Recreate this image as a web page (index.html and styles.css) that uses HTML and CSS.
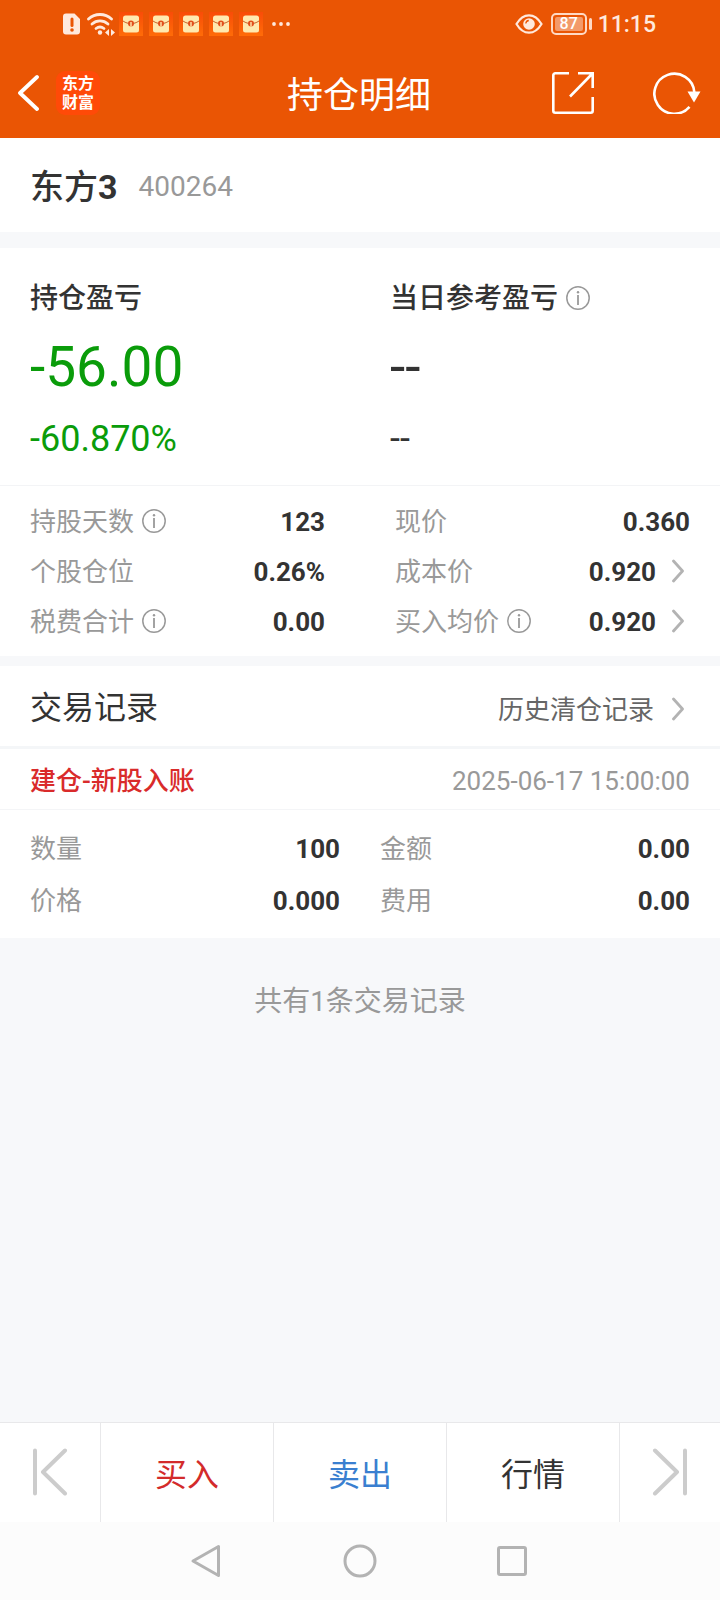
FILE: index.html
```html
<!DOCTYPE html>
<html lang="zh-CN">
<head>
<meta charset="utf-8">
<meta name="viewport" content="width=device-width, initial-scale=1">
<title>持仓明细</title>
<link rel="stylesheet" href="styles.css">
</head>
<body>
<svg class="defs" aria-hidden="true">
  <defs>
    <linearGradient id="packet-bg" x1="0" y1="0" x2="0" y2="1">
      <stop offset="0" stop-color="#f94c08"/>
      <stop offset="1" stop-color="#ff6c08"/>
    </linearGradient>
    <symbol id="packet" viewBox="0 0 24 24">
      <rect width="24" height="24" fill="url(#packet-bg)"/>
      <rect x="4" y="3.500" width="16" height="17" rx="2.500" fill="#ffeab0"/>
      <path d="M4 9c3 2 5 2.500 8 2.500s5-.5 8-2.500" fill="none" stroke="#c8642a" stroke-width="1"/>
      <circle cx="12" cy="11.500" r="3" fill="#e2501c"/>
      <path d="M12 10v4.500" stroke="#ffeab0" stroke-width="1.400"/>
    </symbol>
    <symbol id="info" viewBox="0 0 24 24">
      <circle cx="12" cy="12" r="11.200" fill="none" stroke="#999" stroke-width="1.500"/>
      <circle cx="12" cy="6.300" r="1.200" fill="#999"/>
      <path d="M12 9v10" stroke="#999" stroke-width="1.800"/>
    </symbol>
    <symbol id="chevron" viewBox="0 0 12 24">
      <path d="M1.500 2l9 10-9 10" fill="none" stroke="#b3b3b3" stroke-width="2.800" stroke-linecap="round" stroke-linejoin="round"/>
    </symbol>
  </defs>
</svg>
<div class="app">
  <header class="header">
    <div class="status">
      <div class="status-left">
        <svg class="sim" viewBox="0 0 18 22" aria-hidden="true">
          <path d="M3 .5h8.500l5.500 5.500v12.500a3 3 0 0 1-3 3h-11a3 3 0 0 1-3-3v-15a3 3 0 0 1 3-3z" fill="#ffe9dd"/>
          <path d="M9 6v6.500" stroke="#ea5504" stroke-width="3" stroke-linecap="round"/>
          <circle cx="9" cy="17" r="1.800" fill="#ea5504"/>
        </svg>
        <svg class="wifi" viewBox="0 0 28 24" aria-hidden="true">
          <g fill="none" stroke="#ffe9dd" stroke-width="2.800" stroke-linecap="round">
            <path d="M1.500 7a17 17 0 0 1 23 0"/>
            <path d="M5 12a12 12 0 0 1 16 0"/>
            <path d="M9 16.500a6.500 6.500 0 0 1 8 0"/>
          </g>
          <circle cx="13" cy="20.500" r="2.200" fill="#ffe9dd"/>
          <path d="M22 17v7l-4-3.500zM24 17v7l4-3.500z" fill="#ffe9dd"/>
        </svg>
        <div class="packets">
          <svg class="packet" aria-hidden="true"><use href="#packet"/></svg>
          <svg class="packet" aria-hidden="true"><use href="#packet"/></svg>
          <svg class="packet" aria-hidden="true"><use href="#packet"/></svg>
          <svg class="packet" aria-hidden="true"><use href="#packet"/></svg>
          <svg class="packet" aria-hidden="true"><use href="#packet"/></svg>
        </div>
        <svg class="dots" viewBox="0 0 18 4" aria-hidden="true">
          <g fill="#ffe9dd"><circle cx="2" cy="2" r="1.900"/><circle cx="9" cy="2" r="1.900"/><circle cx="16" cy="2" r="1.900"/></g>
        </svg>
      </div>
      <div class="status-right">
        <svg class="eye" viewBox="0 0 28 20" aria-hidden="true">
          <path d="M1.500 10C5 4 9 1.300 14 1.300S23 4 26.500 10C23 16 19 18.700 14 18.700S5 16 1.500 10z" fill="none" stroke="#ffe9dd" stroke-width="2.200"/>
          <circle cx="14" cy="10" r="5.800" fill="#ffe9dd"/>
          <path d="M10.800 9.500a3.300 3.300 0 0 1 3-3" fill="none" stroke="#ea5504" stroke-width="1.300"/>
        </svg>
        <div class="battery"><span class="battery-level">87</span></div>
        <time class="clock">11:15</time>
      </div>
    </div>
    <div class="titlebar">
      <div class="title-left">
        <button class="icon-button" type="button" aria-label="返回">
          <svg class="back" viewBox="0 0 22 38" aria-hidden="true"><path d="M20 3L3 19l17 16" fill="none" stroke="#fff" stroke-width="3.800" stroke-linecap="round" stroke-linejoin="round"/></svg>
        </button>
        <div class="logo"><span>东方</span><span>财富</span></div>
      </div>
      <h1 class="title">持仓明细</h1>
      <div class="title-right">
        <button class="icon-button" type="button" aria-label="分享">
          <svg class="share" viewBox="0 0 42 42" aria-hidden="true"><path d="M17 1.300H3.300a2 2 0 0 0-2 2v35.400a2 2 0 0 0 2 2h35.400a2 2 0 0 0 2-2V25M26 1.300h14.700V16M40 2L18 24.500" fill="none" stroke="#fff" stroke-width="2.600"/></svg>
        </button>
        <button class="icon-button" type="button" aria-label="刷新">
          <svg class="refresh" viewBox="0 0 48 42" aria-hidden="true"><path d="M41.300 20a20 20 0 1 0-4.800 14.800" fill="none" stroke="#fff" stroke-width="2.600"/><path d="M34.500 19.500h13L41 30.500z" fill="#fff"/></svg>
        </button>
      </div>
    </div>
  </header>

  <main class="content">
    <section class="card stock">
      <h2 class="stock-name">东方<b>3</b></h2>
      <span class="stock-code">400264</span>
    </section>

    <section class="card holding">
      <div class="summary">
        <div>
          <h3 class="summary-label">持仓盈亏</h3>
          <p class="summary-value down">-56.00</p>
          <p class="summary-rate down">-60.870%</p>
        </div>
        <div>
          <h3 class="summary-label">当日参考盈亏<svg class="info" aria-hidden="true"><use href="#info"/></svg></h3>
          <p class="summary-value">--</p>
          <p class="summary-rate">--</p>
        </div>
      </div>
      <dl class="pairs metrics">
        <div class="pair"><dt>持股天数<svg class="info" aria-hidden="true"><use href="#info"/></svg></dt><dd>123</dd></div>
        <div class="pair"><dt>现价</dt><dd>0.360</dd></div>
        <div class="pair"><dt>个股仓位</dt><dd>0.26%</dd></div>
        <div class="pair"><dt>成本价</dt><dd>0.920<svg class="chevron" aria-hidden="true"><use href="#chevron"/></svg></dd></div>
        <div class="pair"><dt>税费合计<svg class="info" aria-hidden="true"><use href="#info"/></svg></dt><dd>0.00</dd></div>
        <div class="pair"><dt>买入均价<svg class="info" aria-hidden="true"><use href="#info"/></svg></dt><dd>0.920<svg class="chevron" aria-hidden="true"><use href="#chevron"/></svg></dd></div>
      </dl>
    </section>

    <section class="card records">
      <div class="records-head">
        <h2 class="records-title">交易记录</h2>
        <a class="history" href="#">历史清仓记录<svg class="chevron" aria-hidden="true"><use href="#chevron"/></svg></a>
      </div>
      <div class="record-head">
        <h3 class="record-type">建仓-新股入账</h3>
        <time class="record-time">2025-06-17 15:00:00</time>
      </div>
      <dl class="pairs details">
        <div class="pair"><dt>数量</dt><dd>100</dd></div>
        <div class="pair"><dt>金额</dt><dd>0.00</dd></div>
        <div class="pair"><dt>价格</dt><dd>0.000</dd></div>
        <div class="pair"><dt>费用</dt><dd>0.00</dd></div>
      </dl>
    </section>
    <p class="total">共有1条交易记录</p>
  </main>

  <footer class="footer">
    <div class="actions">
      <button class="action step-button" type="button" aria-label="上一个">
        <svg class="step" viewBox="0 0 36 48" aria-hidden="true"><path d="M3 2.500v43M33 2.500L11 24l22 21.500" fill="none" stroke="#ccc" stroke-width="4" stroke-linecap="round" stroke-linejoin="round"/></svg>
      </button>
      <button class="action buy" type="button">买入</button>
      <button class="action sell" type="button">卖出</button>
      <button class="action" type="button">行情</button>
      <button class="action step-button" type="button" aria-label="下一个">
        <svg class="step" viewBox="0 0 36 48" aria-hidden="true"><path d="M33 2.500v43M3 2.500L25 24 3 45.500" fill="none" stroke="#ccc" stroke-width="4" stroke-linecap="round" stroke-linejoin="round"/></svg>
      </button>
    </div>
    <nav class="system-nav">
      <button class="icon-button" type="button" aria-label="返回"><svg class="nav-icon" viewBox="0 0 36 36" aria-hidden="true"><path d="M28.500 3.500v29L3 18z" fill="none" stroke="#b3b3b3" stroke-width="3" stroke-linejoin="round"/></svg></button>
      <button class="icon-button" type="button" aria-label="主屏幕"><svg class="nav-icon" viewBox="0 0 36 36" aria-hidden="true"><circle cx="18" cy="18" r="15" fill="none" stroke="#b3b3b3" stroke-width="3"/></svg></button>
      <button class="icon-button" type="button" aria-label="最近任务"><svg class="nav-icon" viewBox="0 0 36 36" aria-hidden="true"><rect x="4.500" y="4.500" width="27" height="27" rx="1.500" fill="none" stroke="#b3b3b3" stroke-width="3"/></svg></button>
    </nav>
  </footer>
</div>
</body>
</html>
```

FILE: styles.css
```css
* {
  box-sizing: border-box;
  margin: 0;
  padding: 0;
}

body {
  background: #f7f8fa;
  color: #333;
  font-family: Roboto, "Noto Sans CJK SC", sans-serif;
  font-size: 26px;
  line-height: 40px;
}

svg {
  display: block;
  flex: none;
}

button {
  border: 0;
  background: none;
  color: inherit;
  font: inherit;
  cursor: pointer;
}

h1, h2, h3 {
  font-weight: 400;
}

.defs {
  position: absolute;
  width: 0;
  height: 0;
}

.app {
  display: flex;
  flex-direction: column;
  min-height: 100vh;
}

/* Header */

.header {
  background: #ea5504;
  color: #fff;
}

.status {
  display: flex;
  justify-content: space-between;
  align-items: center;
  height: 48px;
  padding: 0 64px 0 63px;
}

.status-left,
.status-right {
  display: flex;
  align-items: center;
}

.sim { width: 18px; height: 22px; }
.wifi { width: 28px; height: 24px; margin: 0 4px 0 6px; }
.packets { display: flex; gap: 6px; }
.packet { width: 24px; height: 24px; }
.dots { width: 18px; height: 4px; margin-left: 9px; }
.eye { width: 28px; height: 20px; }

.battery {
  position: relative;
  width: 36px;
  height: 22px;
  margin: 0 11px 0 8px;
  padding: 2px;
  border: 2px solid #ffd9c4;
  border-radius: 5px;
}

.battery::after {
  content: "";
  position: absolute;
  top: 3px;
  right: -7px;
  width: 3px;
  height: 12px;
  border-radius: 2px;
  background: #ffd9c4;
}

.battery-level {
  display: block;
  height: 14px;
  border-radius: 2px;
  background: #f39a6a;
  color: #fff;
  font-size: 16px;
  font-weight: 500;
  line-height: 14px;
  text-align: center;
}

.clock {
  padding-top: 2px;
  color: #ffe9dd;
  font-size: 23px;
  font-weight: 500;
}

.titlebar {
  display: grid;
  grid-template-columns: 1fr auto 1fr;
  align-items: center;
  height: 90px;
  padding: 0 19px 0 17px;
}

.title-left,
.title-right {
  display: flex;
  align-items: center;
}

.title-left { gap: 17px; }
.title-right { justify-content: flex-end; gap: 59px; }
.back { width: 22px; height: 38px; }
.share { width: 42px; height: 42px; }
.refresh { width: 48px; height: 42px; }

.logo {
  display: flex;
  flex-direction: column;
  justify-content: center;
  width: 44px;
  height: 44px;
  border-radius: 9px;
  background: #ff4a08;
  font-size: 16px;
  font-weight: 700;
  line-height: 19px;
  text-align: center;
}

.title {
  padding-top: 5px;
  font-size: 36px;
}

/* Content */

.content {
  flex: 1;
}

.card {
  background: #fff;
}

.stock {
  display: flex;
  align-items: center;
  gap: 21px;
  height: 94px;
  margin-bottom: 16px;
  padding: 4px 30px 0;
}

.stock-name {
  font-size: 34px;
  font-weight: 500;
}

.stock-name b {
  font-weight: 700;
}

.stock-code {
  color: #999;
  font-size: 28px;
}

.holding {
  margin-bottom: 10px;
}

.summary {
  display: grid;
  grid-template-columns: 1fr 1fr;
  padding: 31px 30px 26px;
  border-bottom: 1px solid #f3f4f6;
}

.summary > div + div {
  margin-left: 30px;
}

.summary-label {
  display: flex;
  align-items: center;
  font-size: 28px;
  font-weight: 500;
}

.summary-value {
  margin: 16px 0 20px;
  font-size: 55px;
  line-height: 64px;
}

.summary-rate {
  font-size: 36px;
}

.down {
  color: #0a9c0a;
}

.info {
  width: 24px;
  height: 24px;
  margin: 0 0 2px 8px;
}

.chevron {
  width: 12px;
  height: 24px;
  margin: 0 6px 2px 16px;
}

.pairs {
  display: grid;
  grid-template-columns: 1fr 1fr;
}

.metrics {
  column-gap: 70px;
  padding: 11px 30px 9px;
  line-height: 50px;
}

.details {
  column-gap: 40px;
  padding: 13px 30px 11px;
  line-height: 52px;
}

.pair {
  display: flex;
  justify-content: space-between;
}

.pair dt,
.pair dd {
  display: flex;
  align-items: center;
}

.pair dt {
  color: #999;
}

.pair dd {
  font-weight: 700;
}

.records-head,
.record-head {
  display: flex;
  align-items: center;
  justify-content: space-between;
  padding: 0 30px;
}

.records-head {
  height: 83px;
  border-bottom: 3px solid #f4f6f8;
  padding-top: 4px;
}

.records-title {
  font-size: 32px;
}

.history {
  display: flex;
  align-items: center;
  padding-top: 3px;
  color: #666;
  text-decoration: none;
}

.history .chevron {
  margin-left: 18px;
}

.record-head {
  height: 61px;
  border-bottom: 1px solid #f4f5f7;
  padding-top: 3px;
}

.record-type {
  color: #d92b2b;
  font-size: 26px;
  font-weight: 500;
}

.record-time {
  color: #999;
}

.total {
  padding: 44px 30px 40px;
  color: #999;
  font-size: 28px;
  text-align: center;
}

/* Footer */

.actions {
  display: grid;
  grid-template-columns: 101px 1fr 1fr 1fr 100px;
  height: 100px;
  border-top: 1px solid #e8e8ea;
  background: #fff;
}

.action {
  display: flex;
  align-items: center;
  justify-content: center;
  padding-top: 4px;
  font-size: 32px;
}

.action:not(:last-child) {
  border-right: 1px solid #e8e8ea;
}

.step-button { padding: 0 0 2px; }
.step { width: 36px; height: 48px; }
.buy { color: #d32b2b; }
.sell { color: #3a7fd0; }

.system-nav {
  display: flex;
  align-items: center;
  justify-content: center;
  gap: 116px;
  height: 78px;
  background: #fcfcfc;
}

.nav-icon {
  width: 36px;
  height: 36px;
}
```
